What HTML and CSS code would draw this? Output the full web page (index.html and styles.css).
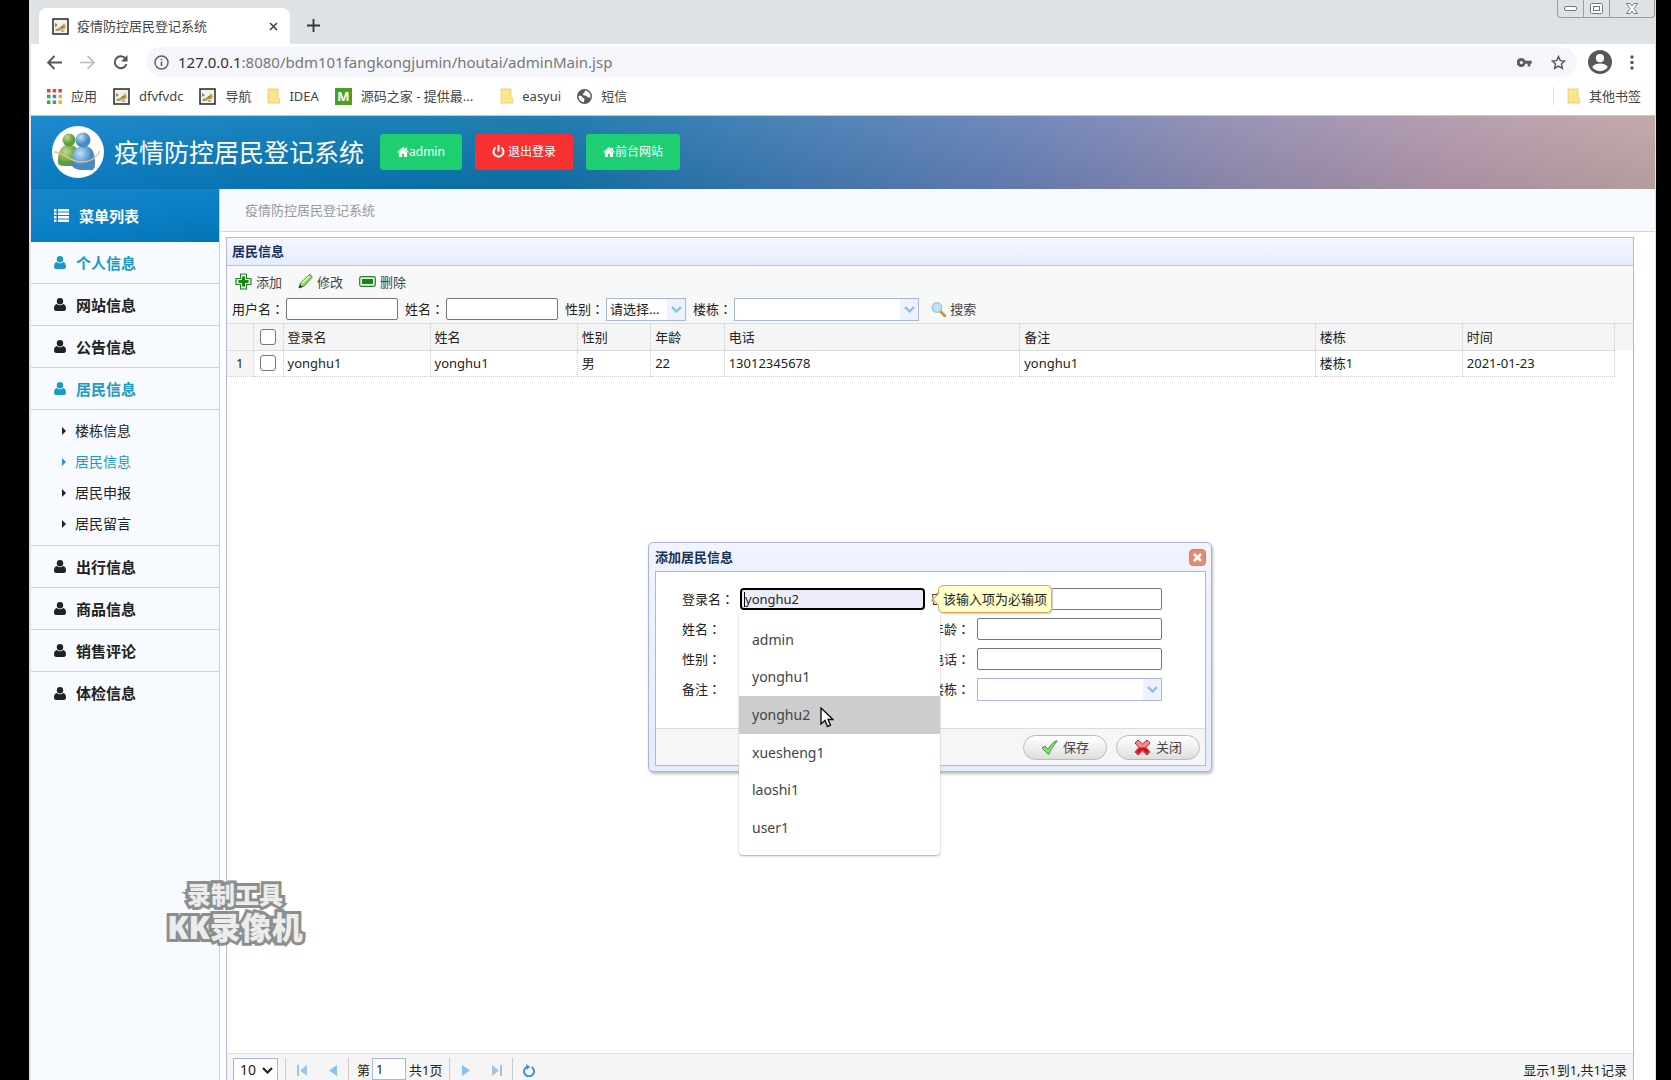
FILE: index.html
```html
<!DOCTYPE html>
<html lang="zh-CN">
<head>
<meta charset="utf-8">
<title>疫情防控居民登记系统</title>
<link rel="stylesheet" href="styles.css">
</head>
<body>
<svg class="defs" aria-hidden="true">
  <symbol id="cat" viewBox="0 0 17 17"><rect x="1" y="1" width="15" height="15" fill="#f4f1e8" stroke="#333" stroke-width="1.600"/><path d="M4 13c1-2 3-4 5-4l3-4 1 2 1 1-1 3-4 1-2 1z" fill="#c7a35a"/><path d="M3 5l3 2-3 2zM9 12l4 1-3 1zM3 12l3-2-1 3z" fill="#7b8a70"/><path d="M8 9l3-1 1 1-3 1z" fill="#a3553e"/></symbol>
  <symbol id="folder" viewBox="0 0 13 16"><path d="M1 1h10v9l2 1v4H1z" fill="#fbe48c" stroke="#ecd070"/></symbol>
  <symbol id="user" viewBox="0 0 12 13"><circle cx="6" cy="3.3" r="3.2"/><path d="M2.8 6a4.6 4.6 0 0 0 6.400 0C11 6.200 12 8 12 10.500 12 12 11.200 13 10 13H2C.8 13 0 12 0 10.500 0 8 1 6.200 2.800 6z"/></symbol>
  <symbol id="home" viewBox="0 0 13 11"><path d="M6.500 0L0 5.500l.8.900L6.500 1.700l5.700 4.700.8-.9-2-1.700V.8H9.200v1.500z"/><path d="M6.500 2L2 6V11h3.500V7.500h2V11H11V6z"/></symbol>
  <symbol id="chev" viewBox="0 0 11 7"><path d="M1 1l4.500 4.500L10 1" fill="none" stroke="currentColor" stroke-width="2.200"/></symbol>
  <symbol id="tri" viewBox="0 0 8 11"><path d="M0 0l8 5.500L0 11z"/></symbol>
</svg>
<div class="window">
  <header class="tabstrip">
    <div class="tab">
      <svg class="i17"><use href="#cat"/></svg>
      <span class="tab-title">疫情防控居民登记系统</span>
      <svg class="i9" viewBox="0 0 9 9"><path d="M1 1l7 7M8 1L1 8" stroke="#444" stroke-width="1.600"/></svg>
    </div>
    <svg class="i13 newtab" viewBox="0 0 13 13"><path d="M6.500 0v13M0 6.500h13" stroke="#333" stroke-width="1.800"/></svg>
    <div class="winctl">
      <button aria-label="最小化"><svg width="13" height="6" viewBox="0 0 13 6"><rect x=".5" y=".5" width="12" height="4" rx="1.500" fill="#fff" stroke="#777"/></svg></button>
      <button aria-label="还原"><svg width="13" height="11" viewBox="0 0 13 11"><rect x=".5" y=".5" width="12" height="10" rx="1" fill="#fff" stroke="#777"/><rect x="3.500" y="3.500" width="6" height="4" fill="none" stroke="#777"/></svg></button>
      <button class="wide" aria-label="关闭窗口"><svg width="12" height="11" viewBox="0 0 12 11"><path d="M.5.5h3.500L6 3l2-2.500h3.500L8 5.500l3.500 5H8L6 8l-2 2.500H.5l3.500-5z" fill="#fff" stroke="#777"/></svg></button>
    </div>
  </header>
  <div class="toolbar">
    <svg class="i15" viewBox="0 0 15 15"><path d="M15 7.500H1.500M7.500 1L1 7.500 7.500 14" fill="none" stroke="#555" stroke-width="1.900"/></svg>
    <svg class="i15" viewBox="0 0 15 15"><path d="M0 7.500h13.500M7.500 1L14 7.500 7.500 14" fill="none" stroke="#bbb" stroke-width="1.700"/></svg>
    <svg class="i15" viewBox="0 0 15 15"><path d="M12.500 3.500A6 6 0 1 0 13.500 9" fill="none" stroke="#555" stroke-width="2"/><path d="M14.500 0v6.500H8z" fill="#555"/></svg>
    <div class="omnibox">
      <svg class="i15" viewBox="0 0 15 15"><circle cx="7.500" cy="7.500" r="6.500" fill="none" stroke="#666" stroke-width="1.500"/><path d="M7.500 6.500V11M7.500 3.700v1.600" stroke="#666" stroke-width="1.600"/></svg>
      <span class="url"><b>127.0.0.1</b>:8080/bdm101fangkongjumin/houtai/adminMain.jsp</span>
      <svg width="15" height="9" viewBox="0 0 16 10"><path fill-rule="evenodd" d="M4.500 0a5 5 0 0 1 4.600 3H16v3.500h-1.500V9.500h-3v-3H9.100A5 5 0 1 1 4.500 0zm0 3.200a1.700 1.700 0 1 0 0 3.500 1.700 1.700 0 0 0 0-3.500z" fill="#5a5d62"/></svg>
      <svg class="i15" viewBox="0 0 15 15"><path d="M7.500 1.500l1.800 4.100 4.500.4-3.400 3 1 4.400-3.900-2.300-3.900 2.300 1-4.400-3.400-3 4.500-.4z" fill="none" stroke="#555" stroke-width="1.400"/></svg>
    </div>
    <svg class="i23" viewBox="0 0 23 23"><circle cx="11.500" cy="11.500" r="11.500" fill="#55585d"/><circle cx="11.500" cy="7.800" r="3.900" fill="#fff"/><path d="M4 16.300c1.500-2.500 5-3.300 7.500-3.300s6 .8 7.500 3.300a9 9 0 0 1-15 0z" fill="#fff"/></svg>
    <svg width="4" height="15" viewBox="0 0 4 15" fill="#555"><circle cx="2" cy="2" r="1.700"/><circle cx="2" cy="7.500" r="1.700"/><circle cx="2" cy="13" r="1.700"/></svg>
  </div>
  <nav class="bookmarks">
    <a href="#"><svg class="i15" viewBox="0 0 15 15"><path d="M0 0h3.500v3.500H0zM5.700 0h3.500v3.500H5.700zM11.400 0h3.500v3.500h-3.500z" fill="#e0453a"/><path d="M0 5.700h3.500v3.500H0z" fill="#34a853"/><path d="M5.700 5.700h3.500v3.500H5.700z" fill="#3b82e8"/><path d="M11.400 5.700h3.500v3.500h-3.500z" fill="#f0a826"/><path d="M0 11.400h3.500v3.500H0zM5.700 11.400h3.500v3.500H5.700z" fill="#34a853"/><path d="M11.400 11.400h3.500v3.500h-3.500z" fill="#f0a826"/></svg>应用</a>
    <a href="#"><svg class="i17"><use href="#cat"/></svg>dfvfvdc</a>
    <a href="#"><svg class="i17"><use href="#cat"/></svg>导航</a>
    <a href="#"><svg class="fold"><use href="#folder"/></svg>IDEA</a>
    <a href="#"><span class="mlogo">M</span>源码之家 - 提供最...</a>
    <a href="#" class="far"><svg class="fold"><use href="#folder"/></svg>easyui</a>
    <a href="#"><svg class="i15" viewBox="0 0 15 15"><circle cx="7.500" cy="7.500" r="7.500" fill="#55585d"/><path d="M1.500 7c2-.5 3 0 4 1.200 1 1 2 .8 2 2s-1 1.500-.5 3C3.500 13 1.500 10 1.500 7zM8 1.600C7.500 3 8 3.500 6.500 4.200 5 5 6 6.500 8 6.500s2 2 3.500 2 1.500 1 2 0C14 5 11.500 2 8 1.600z" fill="#fff"/></svg>短信</a>
    <a href="#" class="other"><svg class="fold"><use href="#folder"/></svg>其他书签</a>
  </nav>

  <div class="site">
    <header class="banner">
      <svg class="logo" viewBox="0 0 52 52"><defs><radialGradient id="g1" cx=".35" cy=".3"><stop offset="0" stop-color="#b9dc8e"/><stop offset="1" stop-color="#5d9c40"/></radialGradient><radialGradient id="g2" cx=".35" cy=".3"><stop offset="0" stop-color="#bfe0f7"/><stop offset="1" stop-color="#4689c4"/></radialGradient></defs><circle cx="26" cy="26" r="26" fill="#fff"/><path d="M6 36c0-11 3-17 11-17s11 6 11 16-3 5-11 5-11 0-11-4z" fill="url(#g1)"/><circle cx="17" cy="14" r="6.500" fill="url(#g1)"/><path d="M20 38c0-12 3-18 12-18s11 8 11 17-3 7-11 7-12-2-12-6z" fill="url(#g2)"/><circle cx="31" cy="14" r="7.500" fill="url(#g2)"/><path d="M2 26c9 0 16 10 27 10s16-5 19-11" fill="none" stroke="#eec46c" stroke-width="1.300"/></svg>
      <h1>疫情防控居民登记系统</h1>
      <button class="btn green"><svg width="12" height="10"><use href="#home"/></svg>admin</button>
      <button class="btn red"><svg class="i13" viewBox="0 0 13 13"><path d="M3.700 2.500a5 5 0 1 0 5.600 0" fill="none" stroke="#fff" stroke-width="2"/><path d="M6.500 0v6.500" stroke="#fff" stroke-width="2"/></svg><span>退出登录</span></button>
      <button class="btn green"><svg width="12" height="10"><use href="#home"/></svg>前台网站</button>
    </header>
    <div class="body">
      <aside class="side">
        <h2><svg class="i15" viewBox="0 0 15 13"><path d="M0 0h2.500v2.500H0zM4 0h11v2.500H4zM0 3.500h2.500V6H0zM4 3.500h11V6H4zM0 7h2.500v2.500H0zM4 7h11v2.500H4zM0 10.500h2.500V13H0zM4 10.500h11V13H4z" fill="#fff"/></svg>菜单列表</h2>
        <a href="#" class="on"><svg class="usr"><use href="#user"/></svg>个人信息</a>
        <a href="#"><svg class="usr"><use href="#user"/></svg>网站信息</a>
        <a href="#"><svg class="usr"><use href="#user"/></svg>公告信息</a>
        <a href="#" class="on"><svg class="usr"><use href="#user"/></svg>居民信息</a>
        <ul>
          <li><a href="#"><i></i>楼栋信息</a></li>
          <li><a href="#" class="on"><i></i>居民信息</a></li>
          <li><a href="#"><i></i>居民申报</a></li>
          <li><a href="#"><i></i>居民留言</a></li>
        </ul>
        <a href="#"><svg class="usr"><use href="#user"/></svg>出行信息</a>
        <a href="#"><svg class="usr"><use href="#user"/></svg>商品信息</a>
        <a href="#"><svg class="usr"><use href="#user"/></svg>销售评论</a>
        <a href="#" class="last"><svg class="usr"><use href="#user"/></svg>体检信息</a>
      </aside>
      <main>
        <div class="crumb">疫情防控居民登记系统</div>
        <section class="panel">
          <h3>居民信息</h3>
          <div class="tools">
            <div class="actions">
              <button><svg class="i17" viewBox="0 0 17 17"><path d="M5.500 1h6v4.500H16v6h-4.500V16h-6v-4.500H1v-6h4.500z" fill="#e2f5df" stroke="#2c7d2b" stroke-width="1.200" stroke-linejoin="round"/><path d="M7 3.500h3V7h3.500v3H10v3.500H7V10H3.500V7H7z" fill="#118a16"/></svg>添加</button>
              <button><svg class="i15" viewBox="0 0 15 15"><path d="M1 14l1.500-5L11 1c1-.8 3.500 1 2.800 2.500L6 12z" fill="#9bdc63" stroke="#3a8525"/><path d="M1 14l1-3.500L4.500 13z" fill="#333"/><path d="M4 9l7.500-7" stroke="#e2ffd0" stroke-width="1.200"/></svg>修改</button>
              <button><svg width="17" height="11" viewBox="0 0 17 11"><rect x=".7" y=".7" width="15.600" height="9.600" rx="1.500" fill="#e2f5df" stroke="#2c7d2b" stroke-width="1.200"/><path d="M3 3h11v5H3z" fill="#118a16"/></svg>删除</button>
            </div>
            <form class="query">
              <label for="q1">用户名<span class="colon">：</span></label><input id="q1" type="text">
              <label for="q2">姓名<span class="colon">：</span></label><input id="q2" type="text">
              <label for="q3">性别<span class="colon">：</span></label><span class="combo short"><select id="q3"><option>请选择...</option></select><svg><use href="#chev"/></svg></span>
              <label for="q4">楼栋<span class="colon">：</span></label><span class="combo"><select id="q4"><option></option></select><svg><use href="#chev"/></svg></span>
              <button type="button"><svg class="i15" viewBox="0 0 15 15"><path d="M9 9l5 5" stroke="#d98b3a" stroke-width="2.800" stroke-linecap="round"/><circle cx="6" cy="5.500" r="4.800" fill="#bfe3fb" stroke="#a3bfd2" stroke-width="1.300"/></svg>搜索</button>
            </form>
          </div>
          <div class="grid">
            <table>
              <colgroup><col class="c-no"><col class="c-ck"><col class="c-m"><col class="c-m"><col class="c-s"><col class="c-s"><col class="c-l"><col class="c-l"><col class="c-m"><col></colgroup>
              <thead><tr><th></th><th><input type="checkbox" aria-label="全选"></th><th>登录名</th><th>姓名</th><th>性别</th><th>年龄</th><th>电话</th><th>备注</th><th>楼栋</th><th>时间</th></tr></thead>
              <tbody><tr><td class="no">1</td><td><input type="checkbox" aria-label="选择 yonghu1"></td><td>yonghu1</td><td>yonghu1</td><td>男</td><td>22</td><td>13012345678</td><td>yonghu1</td><td>楼栋1</td><td>2021-01-23</td></tr></tbody>
            </table>
          </div>
          <footer class="pager">
            <span class="size"><select aria-label="每页条数"><option>10</option></select><svg><use href="#chev"/></svg></span>
            <button class="sep" aria-label="首页"><svg width="10" height="11" viewBox="0 0 10 11"><path d="M0 0h2v11H0zM10 0v11L3 5.500z" fill="#98c7ee"/></svg></button>
            <button aria-label="上一页"><svg width="8" height="11" viewBox="0 0 8 11"><path d="M8 0v11L0 5.500z" fill="#84c2f4"/></svg></button>
            <label class="sep" for="pg">第</label><input id="pg" type="text" value="1"><span class="total">共1页</span>
            <button class="sep" aria-label="下一页"><svg width="8" height="11" fill="#84c2f4"><use href="#tri"/></svg></button>
            <button aria-label="末页"><svg width="10" height="11" viewBox="0 0 10 11"><path d="M8 0h2v11H8zM0 0v11l7-5.500z" fill="#a5c3dc"/></svg></button>
            <button class="sep" aria-label="刷新"><svg width="12" height="13" viewBox="0 0 12 13"><path d="M4 2.800A5 5 0 1 0 8.500 3" fill="none" stroke="#3d93d8" stroke-width="2"/><path d="M3 0l4 2.800L4 6z" fill="#3d93d8"/></svg></button>
            <span class="count">显示1到1,共1记录</span>
          </footer>

          <div class="dialog" role="dialog" aria-label="添加居民信息">
            <div class="dhead"><h3>添加居民信息</h3><button aria-label="关闭对话框"><svg class="i9" viewBox="0 0 9 9"><path d="M1 1l7 7M8 1L1 8" stroke="#fff" stroke-width="2.600"/></svg></button></div>
            <div class="dbox">
              <form class="fields">
                <label for="f1">登录名<span class="colon">：</span></label>
                <div class="field">
                  <input id="f1" class="focus" type="text" value="yonghu2"><span class="caret"></span>
                  <ul class="suggest">
                    <li>admin</li><li>yonghu1</li>
                    <li class="hover">yonghu2<svg class="pointer" viewBox="0 0 14 21"><path d="M1 1v16l4-3.500 2.500 6 3-1.300-2.500-5.700H13z" fill="#fff" stroke="#111" stroke-width="1.400"/></svg></li>
                    <li>xuesheng1</li><li>laoshi1</li><li>user1</li>
                  </ul>
                  <div class="tip">该输入项为必输项</div>
                </div>
                <label for="f2">密码<span class="colon">：</span></label><input id="f2" type="password">
                <label for="f3">姓名<span class="colon">：</span></label><input id="f3" type="text">
                <label for="f4">年龄<span class="colon">：</span></label><input id="f4" type="text">
                <label for="f5">性别<span class="colon">：</span></label><input id="f5" type="text">
                <label for="f6">电话<span class="colon">：</span></label><input id="f6" type="text">
                <label for="f7">备注<span class="colon">：</span></label><input id="f7" type="text">
                <label for="f8">楼栋<span class="colon">：</span></label><span class="combo"><select id="f8"><option></option></select><svg><use href="#chev"/></svg></span>
              </form>
              <div class="dfoot">
                <button><svg class="i17" viewBox="0 0 17 17"><path d="M1 9l3-2 3 3.500C9 6.500 12 3 15.500 1.500l.5 1C12.500 6 10 10.500 7.500 15.500z" fill="#8fe07c" stroke="#34953a"/></svg>保存</button>
                <button><svg class="i17" viewBox="0 0 17 17"><path d="M4 1l4.500 4L13 1l3 3-4 4.500 4 4.500-3 3-4.500-4L4 16l-3-3 4-4.500L1 4z" fill="#f5868b" stroke="#b9252d" stroke-linejoin="round"/><path d="M5 8.500h7l3 4-2 2.500-4.500-4L4 15l-2-2z" fill="#d3131c"/></svg>关闭</button>
              </div>
            </div>
          </div>
        </section>
      </main>
    </div>
  </div>
</div>
<div class="watermark"><span>录制工具</span><strong>KK录像机</strong></div>
</body>
</html>
```

FILE: styles.css
```css
* { box-sizing: border-box; }
body {
  margin: 0;
  height: 100vh;
  overflow: hidden;
  background: #000;
  padding: 0 15px 0 29px;
  font: 13px/18px "Noto Sans", "Noto Sans CJK SC", sans-serif;
  color: #222;
}
h1, h2, h3, ul { margin: 0; padding: 0; font-weight: normal; list-style: none; }
h3 { font-size: 13px; }
a { color: inherit; text-decoration: none; }
button, input, select { font: inherit; color: inherit; margin: 0; }
button { background: none; border: 0; padding: 0; display: flex; align-items: center; }
svg { display: block; flex: none; }
/* centred full-width colon */
.colon { font-family: "Noto Sans CJK TC", sans-serif; font-feature-settings: "locl" 0; }
.defs { position: absolute; width: 0; height: 0; }
.i9 { width: 9px; height: 9px; }
.i13 { width: 13px; height: 13px; }
.i15 { width: 15px; height: 15px; }
.i17 { width: 17px; height: 17px; }
.i23 { width: 24px; height: 24px; }
.fold { width: 13px; height: 16px; }

.window {
  height: 100%;
  display: flex;
  flex-direction: column;
  background: #fff;
  border-left: 2px solid #dfe2e6;
  border-right: 1px solid #dfe2e6;
}

/* browser chrome */
.tabstrip { display: flex; align-items: flex-start; height: 44px; padding-left: 8px; background: #dfe2e5; }
.tab {
  display: flex;
  align-items: center;
  gap: 8px;
  width: 251px;
  height: 36px;
  margin-top: 8px;
  padding: 0 12px 0 13px;
  background: #fff;
  border-radius: 8px 8px 0 0;
}
.tab-title { flex: 1; color: #444; }
.newtab { margin: 19px 0 0 17px; }
.winctl { display: flex; height: 18px; margin-left: auto; border: 1px solid #9a9da1; border-top: 0; border-radius: 0 0 4px 4px; }
.winctl button { width: 26px; justify-content: center; border-right: 1px solid #9a9da1; }
.winctl .wide { width: 44px; border: 0; }
.toolbar { display: flex; align-items: center; gap: 18px; height: 36px; padding: 0 21px 0 16px; }
.toolbar > .i23 { margin-left: -7px; }
.omnibox { display: flex; align-items: center; gap: 19px; flex: 1; height: 30px; padding: 0 11px 0 8px; border-radius: 15px; background: #f5f5fc; }
.url { flex: 1; margin-left: -10px; font-size: 15px; color: #777; }
.url b { font-weight: normal; color: #333; }
.bookmarks { display: flex; align-items: center; gap: 16px; height: 36px; padding: 0 14px 3px 16px; color: #444; border-bottom: 1px solid #c6cbd8; }
.bookmarks a { display: flex; align-items: center; gap: 9px; white-space: nowrap; }
.bookmarks .far { margin-left: 11px; }
.bookmarks .other { margin-left: auto; padding-left: 13px; border-left: 1px solid #ddd; }
.mlogo { width: 17px; height: 17px; background: #4c9f1c; color: #fff; font-weight: bold; line-height: 17px; text-align: center; }

/* site banner */
.site { flex: 1; min-height: 0; display: flex; flex-direction: column; }
.banner {
  display: flex;
  align-items: center;
  height: 73px;
  padding: 0 0 2px 21px;
  background:
    linear-gradient(rgba(255, 255, 255, .08), rgba(0, 0, 0, .05)),
    linear-gradient(95deg, #0b80cb 0, #0878b4 18%, #0f72a8 32%, #3c79b2 46%, #6b80b6 62%, #918bb0 74%, #b096aa 87%, #bfa4a4 100%);
}
.logo { width: 52px; height: 52px; }
h1 { margin: 0 16px 0 10px; color: #fff; font-size: 25px; line-height: 36px; }
.btn { justify-content: center; height: 36px; margin-right: 13px; padding: 0 17px; border-radius: 3px; color: #fff; fill: #fff; font-size: 12px; }
.btn.green { background: #1ecf72; }
.btn.red { background: #f73131; gap: 3px; }

.body { flex: 1; min-height: 0; display: flex; }
.side { width: 189px; background: #f7faff; border-right: 1px solid #cccbe0; font-size: 15px; font-weight: bold; }
.side h2 { display: flex; align-items: center; gap: 10px; height: 53px; padding-left: 23px; color: #fff; font-size: 15px; font-weight: bold; background: linear-gradient(170deg, #1a86c6, #0b80c8 50%, #0474b4); }
.side a { display: flex; align-items: center; height: 42px; padding-left: 23px; gap: 10px; border-bottom: 1px solid #c9d3e0; fill: currentColor; }
.side a.last { border: 0; }
.side .on { color: #1b9ac6; }
.usr { width: 12px; height: 13px; }
.side ul { display: grid; grid-template-rows: repeat(4, 1fr); height: 136px; padding: 5px 0; border-bottom: 1px solid #c9d3e0; font-size: 14px; font-weight: normal; }
.side li a { height: 100%; border: 0; padding-left: 31px; gap: 9px; }
.side i { border: 4px solid transparent; border-left: 4px solid; border-right: 0; }

/* resident list */
main { flex: 1; min-width: 0; display: flex; flex-direction: column; }
.crumb { height: 43px; padding: 12px 25px; background: #f7faff; border-bottom: 1px solid #d3d7e6; color: #999; }
.panel { position: relative; flex: 1; min-height: 0; display: flex; flex-direction: column; margin: 5px 21px 0 6px; border: 1px solid #b3b7d8; border-bottom: 0; }
.panel > h3 { height: 28px; padding: 4px 5px; background: linear-gradient(#f6f6ff, #e5eeff); border-bottom: 1px solid #b3c3e0; color: #17305c; font-weight: bold; }
.tools { height: 58px; background: #f7f9f8; border-bottom: 1px solid #ddd; }
.actions { display: flex; align-items: center; height: 31px; padding-left: 8px; gap: 16px; color: #444; }
.actions button { gap: 4px; }
.query { display: flex; align-items: center; height: 24px; padding-left: 5px; }
.query label { margin-right: 2px; white-space: nowrap; }
.query > input { width: 112px; margin-right: 7px; }
.query button { gap: 4px; margin-left: 5px; color: #444; }
input[type="text"], input[type="password"] { height: 22px; padding: 0 3px; border: 1px solid #777; border-radius: 2px; background: #fff; }
.combo { display: grid; grid-template-columns: 1fr 18px; width: 185px; height: 23px; margin-right: 7px; border: 1px solid #a9b6dd; background: #fff; color: #222; }
.combo.short { width: 80px; }
.combo select { grid-area: 1 / 1 / 2 / 3; min-width: 0; padding: 0 3px; border: 0; appearance: none; background: linear-gradient(#eef2ff, #eef2ff) right / 18px 100% no-repeat; }
.combo svg { grid-area: 1 / 2; place-self: center; width: 11px; height: 7px; color: #7fc0ec; pointer-events: none; }

.grid { flex: 1; min-height: 0; background: linear-gradient(#f5f5f5, #f5f5f5) top / 100% 26px no-repeat; }
table { width: calc(100% - 18px); table-layout: fixed; border-collapse: collapse; }
.c-no { width: 26px; }
.c-ck { width: 30px; }
.c-m { width: 10.6%; }
.c-s { width: 5.3%; }
.c-l { width: 21.3%; }
th, td { height: 26px; padding: 0 0 0 4px; border-right: 1px dotted #ccc; border-bottom: 1px dotted #ccc; text-align: left; font-weight: normal; }
th { border-bottom: 1px solid #ddd; }
td.no { padding: 0; text-align: center; background: #f5f5f5; }
th:nth-child(2), td:nth-child(2) { padding: 0; }
input[type="checkbox"] { display: block; width: 16px; height: 16px; margin: 0 auto; appearance: none; border: 1px solid #777; border-radius: 3px; background: #fff; }

.pager { display: flex; align-items: flex-start; height: 27px; padding: 4px 6px 0; border-top: 1px solid #ddd; background: #f5f5f5; overflow: hidden; }
.pager > * { height: 24px; flex: none; }
.size { display: grid; grid-template-columns: 1fr 19px; width: 45px; border: 1px solid #a9b6dd; background: #fff; }
.size select { grid-area: 1 / 1 / 2 / 3; appearance: none; border: 0; background: none; padding: 0 6px; font-size: 14px; }
.size svg { grid-area: 1 / 2; place-self: center; width: 11px; height: 7px; color: #222; }
.pager button { width: 31px; justify-content: center; }
.pager .sep { border-left: 1px solid #ccc; }
.pager button.sep { width: 32px; }
.size + button.sep { margin-left: 7px; }
.pager label { padding: 3px 2px 3px 8px; }
.pager input { width: 34px; border: 1px solid #a9b6dd; border-radius: 0; }
.total { padding: 3px 7px 3px 3px; }
.count { margin-left: auto; padding: 3px 0; }

/* add-resident dialog */
.dialog { position: absolute; top: 304px; left: 0; right: 0; width: 564px; margin: 0 auto; padding: 0 5px 5px 6px; border: 1px solid #a9b3dc; border-radius: 5px; background: linear-gradient(#f1f4ff, #e4ecfd); box-shadow: 1px 2px 3px #bbb; }
.dhead { display: flex; align-items: center; justify-content: space-between; height: 28px; }
.dhead h3 { font-weight: bold; color: #17305c; }
.dhead button { width: 17px; height: 17px; justify-content: center; border-radius: 4px; background: #e58a70; border: 1px solid #cf8272; }
.dbox { border: 1px solid #a9b6dd; background: #fff; }
.fields { display: grid; grid-template-columns: 58px 185px 45px 185px; grid-auto-rows: 30px; align-items: center; padding: 12px 0 24px 26px; }
.fields > label:nth-of-type(even) { margin-left: 6px; margin-right: -6px; }
.fields > label:nth-of-type(even) + * { margin-left: 7px; }
.fields > * { white-space: nowrap; }
.fields .combo { width: 185px; margin-right: 0; }
.fields input { width: 185px; }
.field { position: relative; height: 22px; }
.fields .focus { display: block; border: 2px solid #000; border-radius: 4px; background: #ececfa; }
.caret { position: absolute; left: 4px; top: 4px; width: 1px; height: 15px; background: #000; }
.suggest { position: absolute; z-index: 1; top: 25px; left: -1px; display: grid; grid-template-rows: repeat(6, 1fr); width: 201px; height: 242px; padding: 8px 0; background: #fff; border-radius: 0 0 4px 4px; box-shadow: 0 1px 2px #aaa; font-size: 14px; color: #444; }
.suggest li { position: relative; display: flex; align-items: center; padding-left: 13px; }
.suggest .hover { background: #cdcdcd; }
.pointer { position: absolute; left: 81px; top: 11px; width: 14px; height: 21px; }
.tip { position: absolute; z-index: 2; left: 198px; top: -3px; height: 28px; padding: 4px 4px; border: 1px solid #d8a750; border-radius: 5px; background: #ffffcc; box-shadow: 1px 1px 2px #ccc; }
.tip::before { content: ""; position: absolute; left: -5px; top: 9px; width: 8px; height: 8px; transform: rotate(45deg); border: solid #d8a750; border-width: 0 0 1px 1px; background: #ffffcc; }
.dfoot { display: flex; align-items: center; justify-content: flex-end; gap: 9px; height: 37px; padding-right: 5px; border-top: 1px solid #ddd; background: #f6f6f6; }
.dfoot button { width: 84px; height: 25px; justify-content: center; gap: 5px; border: 1px solid #bbb; border-radius: 13px; background: linear-gradient(#fff, #f0f0f0 50%, #dedede); color: #444; }

/* recorder watermark floating over the page */
.watermark { position: absolute; left: 165px; top: 879px; width: 140px; display: grid; justify-items: center; color: #ececec; -webkit-text-stroke: 6px #858b88; paint-order: stroke fill; opacity: .95; font-weight: 900; font-size: 24px; line-height: 32px; white-space: nowrap; }
.watermark strong { font-size: 31px; font-weight: 900; }
```
